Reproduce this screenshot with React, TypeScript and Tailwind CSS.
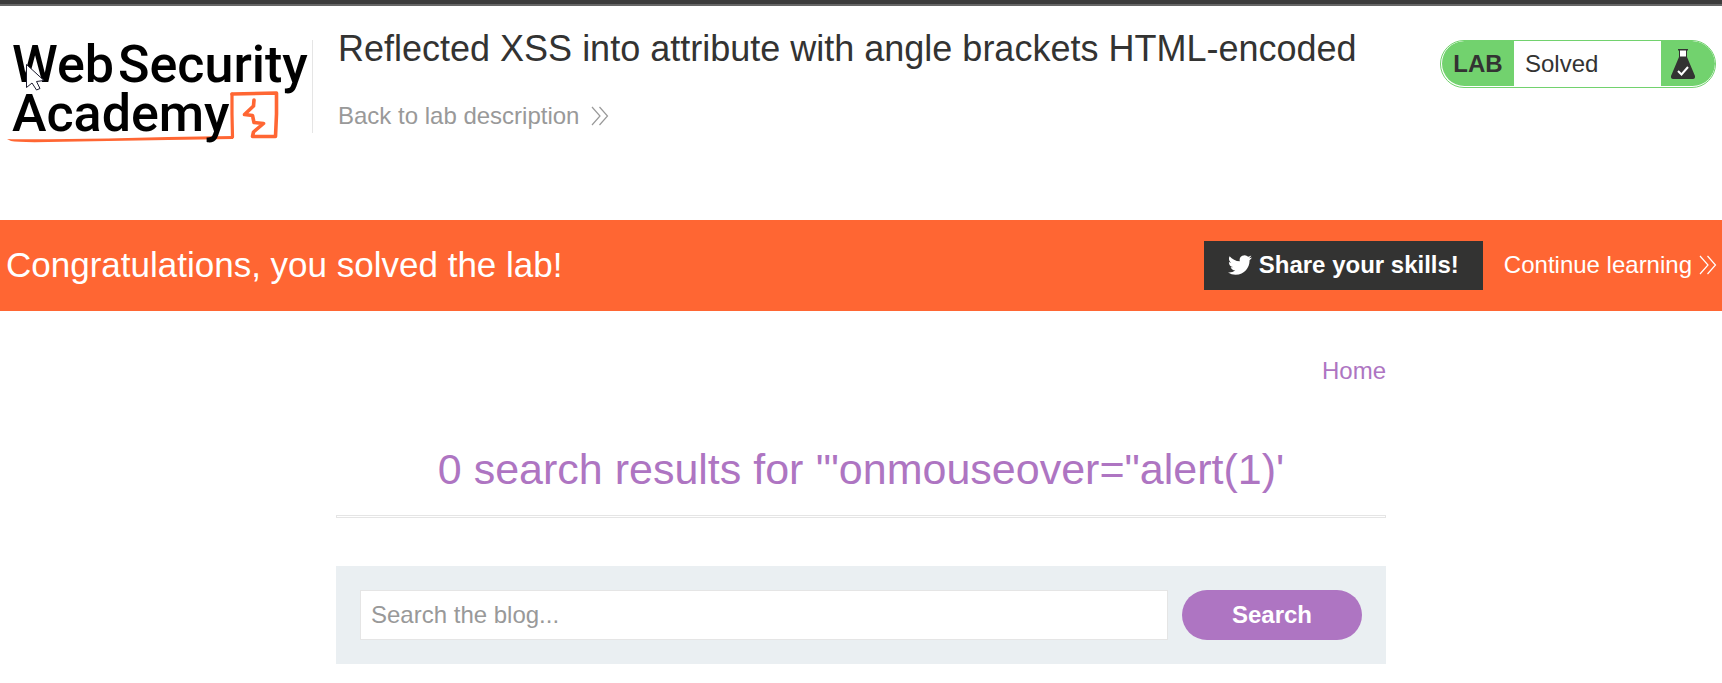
import React from "react";

function Chevrons({ className }: { className?: string }) {
  return (
    <svg
      viewBox="0 0 18 20"
      className={`h-5 w-[18px] shrink-0 ${className ?? ""}`}
      fill="none"
      stroke="currentColor"
      strokeWidth="1.2"
      aria-hidden="true"
    >
      <path d="M1 1 L9 10 L1 19" />
      <path d="M8.5 1 L16.5 10 L8.5 19" />
    </svg>
  );
}

function Logo() {
  return (
    <svg viewBox="-2 0 306 112" className="h-28 w-[306px] overflow-visible" role="img" aria-label="Web Security Academy">
      <g fill="none" stroke="#ff6633" strokeLinejoin="round" strokeLinecap="round">
        <path d="M224 60 L268.500 59 L268.500 80 L267.500 102.500 L244.500 102.500 L245.500 98 L255.500 89.500 L246 88.500 L244.500 81.500 L236.500 80.500 L245.500 72 L246 66" strokeWidth="3.600" />
        <path d="M224 60 L224 80 L224.500 103" strokeWidth="3.200" />
      </g>
      <path d="M-1 105 Q10 105.500 40 105.300 L100 104.500 L160 103 L225 102 L225 105 L160 106 L100 107 L40 108 Q10 108.500 3 107 Z" fill="#ff6633" />
      <g fontFamily="Roboto, sans-serif" fontWeight="500" fontSize="52" fill="#000">
        <text x="4" y="48">Web</text>
        <text x="110" y="48">Security</text>
        <text x="4" y="97">Academy</text>
      </g>
      <path
        d="M18.500 30.500 L18.500 53.500 L24 49 L28.500 56 L32 54.500 L28.500 47.500 L36 46.500 Z"
        fill="#fff"
        stroke="#1a1a2e"
        strokeWidth="1"
      />
    </svg>
  );
}

function Flask() {
  return (
    <svg viewBox="0 0 24 30" className="h-[30px] w-6" aria-hidden="true">
      <path d="M8.500 1 H15.500 V9 H8.500 Z" fill="#fff" />
      <path d="M7 0 H17 V1.500 H16 V8 L24 27 Q24.500 30 21.500 30 H2.500 Q-0.500 30 0 27 L8 8 V1.500 H7 Z M9 1.500 V7.500 H15 V1.500 Z" fill="#333332" fillRule="evenodd" />
      <path d="M7 22 L10.500 25.500 L17 18" fill="none" stroke="#fff" strokeWidth="2" />
    </svg>
  );
}

function Twitter() {
  return (
    <svg viewBox="0 0 24 24" className="size-6" fill="currentColor" aria-hidden="true">
      <path d="M23.953 4.570a10 10 0 01-2.825.775 4.958 4.958 0 002.163-2.723c-.951.555-2.005.959-3.127 1.184a4.920 4.920 0 00-8.384 4.482C7.690 8.095 4.067 6.130 1.640 3.162a4.822 4.822 0 00-.666 2.475c0 1.710.870 3.213 2.188 4.096a4.904 4.904 0 01-2.228-.616v.060a4.923 4.923 0 003.946 4.827 4.996 4.996 0 01-2.212.085 4.936 4.936 0 004.604 3.417 9.867 9.867 0 01-6.102 2.105c-.390 0-.779-.023-1.170-.067a13.995 13.995 0 007.557 2.209c9.053 0 13.998-7.496 13.998-13.985 0-.210 0-.420-.015-.630A9.935 9.935 0 0024 4.590z" />
    </svg>
  );
}

export default function App() {
  return (
    <div className="min-h-screen bg-white font-['Liberation_Sans',Arial,sans-serif] text-2xl text-[#333332]">
      <div className="h-1.5 border-b-2 border-[#666666] bg-[#3c3c3c]" />

      <header className="flex items-start px-1.5 pt-[22px] pb-[74px]">
        <a href="#academy" className="mt-1.5 shrink-0">
          <Logo />
        </a>
        <div className="mt-3 h-[93px] border-l border-[#e5e5e5]" />
        <div className="flex grow flex-col items-start gap-[30px] pl-[25px]">
          <h1 className="text-4xl leading-[42px]">
            Reflected XSS into attribute with angle brackets HTML-encoded
          </h1>
          <a href="#description" className="flex items-center gap-3 leading-8 text-[#999999]">
            Back to lab description
            <Chevrons />
          </a>
        </div>
        <div className="mt-3 flex h-12 w-[276px] shrink-0 overflow-hidden rounded-full border border-[#72d26e] pb-px pl-px">
          <span className="flex w-[72px] items-center justify-center rounded-l-full bg-[#72d26e] font-bold">
            LAB
          </span>
          <span className="flex grow items-center pl-[11px]">Solved</span>
          <span className="flex w-[54px] items-center rounded-r-full bg-[#72d26e] pl-2.5">
            <Flask />
          </span>
        </div>
      </header>

      <section className="flex items-center bg-[#ff6633] py-[21px] pr-[5px] pl-1.5 text-white">
        <h2 className="grow pb-0.5 text-[35px] leading-10">Congratulations, you solved the lab!</h2>
        <button
          type="button"
          className="flex h-[49px] items-center gap-[7px] bg-[#333332] px-6 pb-0.5 leading-7 font-bold"
        >
          <Twitter />
          Share your skills!
        </button>
        <a href="#learning" className="ml-[21px] flex items-center gap-[7px] pb-0.5 leading-7">
          Continue learning
          <Chevrons />
        </a>
      </section>

      <main className="mx-auto w-full max-w-[1050px] pt-11 text-[#ae75c2]">
        <nav className="flex justify-end">
          <a href="#home" className="leading-8">
            Home
          </a>
        </nav>
        <h2 className="mt-14 text-center text-[43px] leading-[52px]">
          0 search results for '"onmouseover="alert(1)'
        </h2>
        <div className="mt-5 h-[3px] border border-[#e5e5e5]" />
        <form
          className="mt-12 flex gap-3.5 bg-[#eaeff2] p-6"
          onSubmit={(e: React.FormEvent) => e.preventDefault()}
        >
          <input
            type="text"
            aria-label="Search the blog"
            placeholder="Search the blog..."
            className="h-[50px] min-w-0 grow border border-[#e5e5e5] bg-white px-2.5 text-[#333332] outline-none placeholder:text-[#999999]"
          />
          <button type="submit" className="h-[50px] w-[180px] rounded-full bg-[#ae75c2] font-bold text-white">
            Search
          </button>
        </form>
      </main>
    </div>
  );
}
